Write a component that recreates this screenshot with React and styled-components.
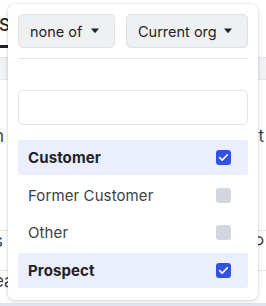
import React from 'react'
import styled, { createGlobalStyle } from 'styled-components'

const GlobalStyle = createGlobalStyle`
    html, body {
        margin: 0;
        padding: 0;
        background: #ffffff;
        font-family: Inter, "Noto Sans", sans-serif;
        color: #1f2328;
    }
    * { box-sizing: border-box; }
`

const options = [
    { name: 'Customer', checked: true },
    { name: 'Former Customer', checked: false },
    { name: 'Other', checked: false },
    { name: 'Prospect', checked: true },
]

const Caret = () => (
    <svg width="10" height="6" viewBox="0 0 10 6">
        <path d="M1 0.5h8L5 5.2z" fill="#1f2328" />
    </svg>
)

const Check = () => (
    <svg width="11" height="9" viewBox="0 0 11 9">
        <path d="M1.6 4.6l2.6 2.5L9.4 1.8" fill="none" stroke="#fff" strokeWidth="1.6" strokeLinecap="round" strokeLinejoin="round" />
    </svg>
)

export default function App() {
    return (
        <Page>
            <GlobalStyle />
            <Backdrop>
                <TabBar><Tab>Se</Tab></TabBar>
                <Band />
                <BgRow $top={46}><span>n</span><span>t</span></BgRow>
                <BgRow $top={84} $bordered><span>s</span><UndoMark>⟲</UndoMark></BgRow>
                <BgRow $top={20} $bordered><span>ea</span><span /></BgRow>
                <BottomBar />
            </Backdrop>
            <Popover>
                <Controls>
                    <Select><span>none of</span><Caret /></Select>
                    <Select $wide><span>Current org</span><Caret /></Select>
                </Controls>
                <Divider />
                <SearchBox />
                <List>
                    {options.map(option => (
                        <Option key={option.name} $checked={option.checked}>
                            <span>{option.name}</span>
                            <Box $checked={option.checked}>{option.checked && <Check />}</Box>
                        </Option>
                    ))}
                </List>
            </Popover>
        </Page>
    )
}

const Page = styled.div`
    position: relative;
    width: 266px;
    height: 306px;
    overflow: hidden;
`

const Backdrop = styled.div`
    display: flex;
    flex-direction: column;
    height: 100%;
    color: #3a3f45;
`

const TabBar = styled.div`
    height: 58px;
    padding-top: 15px;
    border-bottom: 1px solid #e4e6ea;
`

const Tab = styled.div`
    display: inline-block;
    font-size: 17px;
    font-weight: 500;
    padding: 0 0 10px 0;
    margin-left: -1px;
    border-bottom: 3px solid #1f2328;
    color: #1f2328;
`

const Band = styled.div`
    height: 22px;
    background: #f1f2f4;
    border-bottom: 1px solid #e4e6ea;
`

const BgRow = styled.div`
    display: flex;
    justify-content: space-between;
    align-items: center;
    margin-top: ${p => p.$top}px;
    height: 20px;
    font-size: 17px;
    padding: 0 2px 0 0;
    margin-left: -6px;
    border-top: ${p => p.$bordered ? '1px solid #e4e6ea' : 'none'};
`

const UndoMark = styled.span`
    font-size: 15px;
    color: #1f2328;
`

const BottomBar = styled.div`
    margin-top: auto;
    height: 3px;
    background: #dfe3ee;
`

const Popover = styled.div`
    position: absolute;
    left: 8px;
    top: 4px;
    width: 250px;
    height: 296px;
    background: #ffffff;
    border-radius: 7px;
    box-shadow: 0 1px 4px rgba(0, 0, 0, 0.16), 0 0 0 1px rgba(0, 0, 0, 0.03);
    padding: 10px 10px 12px 10px;
    display: flex;
    flex-direction: column;
`

const Controls = styled.div`
    display: flex;
    gap: 11px;
`

const Select = styled.div`
    display: flex;
    align-items: center;
    justify-content: space-between;
    width: ${p => p.$wide ? '122px' : '97px'};
    height: 34px;
    padding: 0 14px 0 11px;
    background: #eff0f2;
    border: 1px solid #dfe1e5;
    border-radius: 5px;
    font-size: 14.5px;
    color: #1f2328;
`

const Divider = styled.div`
    height: 1px;
    background: #e3e5e8;
    margin-top: 10px;
`

const SearchBox = styled.div`
    height: 36px;
    margin-top: 31px;
    border: 1px solid #e3e5e8;
    border-radius: 5px;
`

const List = styled.div`
    display: flex;
    flex-direction: column;
    gap: 2.6px;
    margin-top: 15px;
`

const Option = styled.div`
    display: flex;
    align-items: center;
    justify-content: space-between;
    height: 35px;
    padding: 0 17px 0 10px;
    border-radius: 3px;
    background: ${p => p.$checked ? '#ebeefc' : 'transparent'};
    font-size: 15px;
    font-weight: ${p => p.$checked ? 700 : 400};
    color: ${p => p.$checked ? '#1f2328' : '#3a3f45'};
    letter-spacing: 0.1px;
`

const Box = styled.div`
    width: 15px;
    height: 15px;
    border-radius: 3px;
    background: ${p => p.$checked ? '#3451e6' : '#d3d6de'};
    display: flex;
    align-items: center;
    justify-content: center;
`
